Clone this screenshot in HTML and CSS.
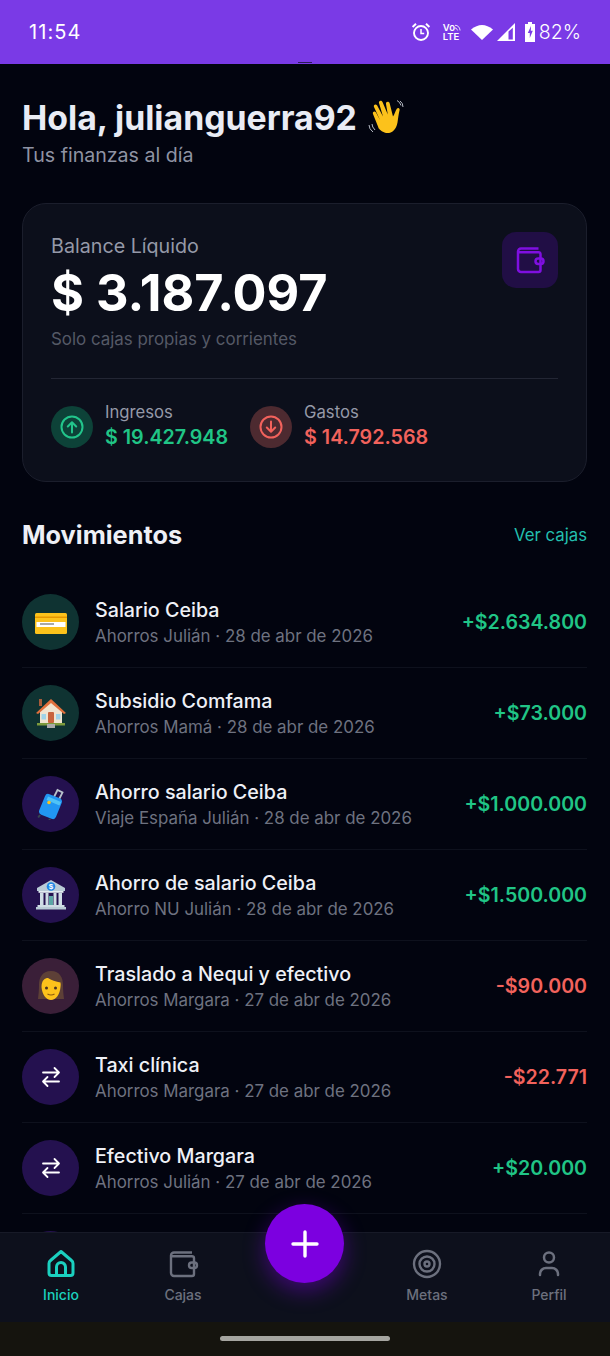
FILE: index.html
```html
<!DOCTYPE html>
<html lang="es">
<head>
<meta charset="utf-8">
<title>Inicio</title>
<link rel="stylesheet" href="styles.css">
</head>
<body>
<div class="app">
  <header class="status">
    <span class="clock">11:54</span>
    <div class="status-icons">
      <svg class="si-alarm" viewBox="0 0 20 20" width="20" height="20" fill="none" stroke="#fff" stroke-width="1.9"><circle cx="10" cy="11" r="7"/><path d="M10 7v4.4h3.2" stroke-width="1.5"/><path d="M1.6 5 5 1.8M18.4 5 15 1.800" stroke-width="2"/></svg>
      <span class="volte"><span>Vo<svg viewBox="0 0 8 8" width="8" height="8" fill="none" stroke="#fff" stroke-width="1"><path d="M0 2q5 0 6 6M0 5q2 0 3 3"/></svg></span><span>LTE</span></span>
      <svg class="si-wifi" viewBox="0 0 22 16" width="22" height="16"><path d="M0 5.500Q11-3.500 22 5.500L11 16Z" fill="#fff"/></svg>
      <svg class="si-signal" viewBox="0 0 18 18" width="18" height="18"><path d="M0 18 18 0V18Z" fill="#fff"/><path d="M11.500 8.500V16.400H15.800V4.800Z" fill="#7a3ae6"/></svg>
      <svg class="si-batt" viewBox="0 0 10 20" width="10" height="20"><path d="M3 0h4v2h3v18H0V2h3Z" fill="#fff"/><path d="M6 4 2.800 11h2v5l3-7.200H5.800Z" fill="#7a3ae6"/></svg>
      <span class="pct">82%</span>
    </div>
    <i class="notch"></i>
  </header>

  <main class="main">
    <section class="hello">
      <h1>Hola, julianguerra92
        <svg class="wave" viewBox="0 0 38 38" width="38" height="38"><path d="M12 30 6 15c-1-2.500 2-3.500 3-1.500l4 7.500-6-13c-1-2.500 2-3.500 3.200-1.500l5.800 11-4-13.500c-.7-2.500 2.500-3.300 3.500-1l5.300 12.500-1.800-10.500c-.4-2.500 3-3 3.700-.6l3.300 13.100c1.500-2 2.500-6 4-8 1.500-1.500 3 0 2.600 1.500-1 4-1.400 8-2.100 12.500-1.500 9-8 12-13 10-4-1.500-6-4-8.500-8.500Z" fill="#fcc21b"/><path d="M33 2q3 2 3 6M30 1.500q3 1.500 4 5M2 26q0 4 4 7M5 25q0 3 3 6" fill="none" stroke="#b7bcc6" stroke-width="1"/></svg>
      </h1>
      <p>Tus finanzas al día</p>
    </section>

    <section class="card">
      <div class="card-top">
        <div class="bal">
          <div class="bal-label">Balance Líquido</div>
          <div class="bal-value">$ 3.187.097</div>
          <div class="bal-note">Solo cajas propias y corrientes</div>
        </div>
        <div class="tile">
          <svg viewBox="0 0 32 32" width="32" height="32" fill="none" stroke="#7f0fe0" stroke-width="2.500" stroke-linejoin="round"><path d="M24.500 4.500H7a3 3 0 0 0-3 3V25a3 3 0 0 0 3 3h17.500a2 2 0 0 0 2-2V10a2 2 0 0 0-2-1.800H4"/><rect x="21.500" y="14.500" width="8" height="5.500" rx="2.700"/></svg>
        </div>
      </div>
      <div class="flows">
        <div class="flow">
          <span class="flow-ic up"><svg viewBox="0 0 24 24" width="24" height="24" fill="none" stroke="#22c58b" stroke-width="2" stroke-linecap="round" stroke-linejoin="round"><circle cx="12" cy="12" r="10.500"/><path d="M12 17.500V7.500M7.800 11.500 12 7.300l4.200 4.200"/></svg></span>
          <div><div class="flow-label">Ingresos</div><div class="flow-value pos">$ 19.427.948</div></div>
        </div>
        <div class="flow">
          <span class="flow-ic down"><svg viewBox="0 0 24 24" width="24" height="24" fill="none" stroke="#f2625c" stroke-width="2" stroke-linecap="round" stroke-linejoin="round"><circle cx="12" cy="12" r="10.500"/><path d="M12 6.500v10M7.800 12.500 12 16.700l4.200-4.200"/></svg></span>
          <div><div class="flow-label">Gastos</div><div class="flow-value neg">$ 14.792.568</div></div>
        </div>
      </div>
    </section>

    <div class="sec-head">
      <h2>Movimientos</h2>
      <span class="link">Ver cajas</span>
    </div>

    <ul class="list">
      <li class="row">
        <span class="av green"><svg viewBox="0 0 32 32" width="32" height="32"><rect x="0" y="7" width="32" height="21" rx="1.500" fill="#fcc21b"/><rect x="0" y="10.500" width="32" height="1.500" fill="#e59600"/><rect x="1.500" y="16" width="29" height="5" fill="#fff"/><rect x="5" y="17.500" width="14" height="1" fill="#555"/></svg></span>
        <div class="tx"><div class="tx-title">Salario Ceiba</div><div class="tx-sub">Ahorros Julián · 28 de abr de 2026</div></div>
        <span class="amt pos">+$2.634.800</span>
      </li>
      <li class="row">
        <span class="av green"><svg viewBox="0 0 32 32" width="32" height="32"><rect x="4" y="2" width="3" height="7" fill="#a65b3a"/><path d="M5 14 16 5l11 9v12H5Z" fill="#f0e4cf"/><path d="M1 16 16 2l15 14-2 1L16 6 3 17Z" fill="#e0703c"/><rect x="13" y="15" width="6" height="11" rx="1" fill="#c8643c"/><rect x="6.500" y="17" width="4.500" height="5.500" fill="#9fd4e8"/><rect x="21" y="17" width="4.500" height="5.500" fill="#9fd4e8"/><rect x="2" y="26" width="28" height="2.500" fill="#7c9a3c"/><rect x="12" y="27" width="8" height="4" fill="#a9a9a9"/></svg></span>
        <div class="tx"><div class="tx-title">Subsidio Comfama</div><div class="tx-sub">Ahorros Mamá · 28 de abr de 2026</div></div>
        <span class="amt pos">+$73.000</span>
      </li>
      <li class="row">
        <span class="av violet"><svg viewBox="0 0 32 32" width="32" height="32"><path d="M19 9 22.500 2l5 2.500-3.500 7" fill="none" stroke="#b8c2cc" stroke-width="1.800"/><rect x="6.500" y="7.500" width="18" height="22" rx="3.500" transform="rotate(22 15.500 18.500)" fill="#2196f3"/><path d="M13 8.500 26 14l-1.500 3.500L11.500 12Z" fill="#4fc3f7"/><circle cx="14" cy="14.500" r="1.800" fill="#fcc21b"/><path d="M5 27l-1.800 2.500M15 31l-1 2" stroke="#37474f" stroke-width="2"/></svg></span>
        <div class="tx"><div class="tx-title">Ahorro salario Ceiba</div><div class="tx-sub">Viaje España Julián · 28 de abr de 2026</div></div>
        <span class="amt pos">+$1.000.000</span>
      </li>
      <li class="row">
        <span class="av violet"><svg viewBox="0 0 32 32" width="32" height="32"><path d="M16 1 30 9v3H2V9Z" fill="#b9cbd6"/><circle cx="16" cy="7.500" r="4.300" fill="#1e88e5"/><text x="16" y="10.300" class="bank-s">$</text><rect x="3.500" y="12" width="25" height="1.800" fill="#e2ecf1"/><g fill="#cfdde5"><rect x="5" y="14" width="3.500" height="12"/><rect x="10.500" y="14" width="3" height="12"/><rect x="18.500" y="14" width="3" height="12"/><rect x="23.500" y="14" width="3.500" height="12"/></g><rect x="14" y="17" width="4" height="9" fill="#5aa6a6"/><rect x="2.500" y="26" width="27" height="2" fill="#cfdde5"/><rect x="1" y="28" width="30" height="2.500" fill="#b9cbd6"/></svg></span>
        <div class="tx"><div class="tx-title">Ahorro de salario Ceiba</div><div class="tx-sub">Ahorro NU Julián · 28 de abr de 2026</div></div>
        <span class="amt pos">+$1.500.000</span>
      </li>
      <li class="row">
        <span class="av plum"><svg viewBox="0 0 32 32" width="32" height="32"><path d="M16 1C7 1 4 8 4 15c0 5-.5 10-1 14h26c-.5-4-1-9-1-14 0-7-3-14-12-14Z" fill="#5d4037"/><path d="M6.500 17C6.500 10 10 8 13 8c3 2 8 4 12.500 4.500.3 1.500.3 3 0 4.500C25 24 21 30 16 30S7 24 6.500 17Z" fill="#fcc21b"/><circle cx="11.500" cy="18" r="1.500" fill="#4a3320"/><circle cx="20.500" cy="18" r="1.500" fill="#4a3320"/><path d="M12.500 24q3.500 2 7 0" fill="none" stroke="#8a5a12" stroke-width="1.200"/></svg></span>
        <div class="tx"><div class="tx-title">Traslado a Nequi y efectivo</div><div class="tx-sub">Ahorros Margara · 27 de abr de 2026</div></div>
        <span class="amt neg">-$90.000</span>
      </li>
      <li class="row">
        <span class="av violet"><svg class="swap" viewBox="0 0 24 24" width="24" height="24" fill="none" stroke="#fff" stroke-width="1.800" stroke-linecap="round" stroke-linejoin="round"><path d="M4 7.500h16M15.500 3l4.500 4.500-4.500 4.500M20 16.500H4M8.500 12 4 16.500 8.500 21"/></svg></span>
        <div class="tx"><div class="tx-title">Taxi clínica</div><div class="tx-sub">Ahorros Margara · 27 de abr de 2026</div></div>
        <span class="amt neg">-$22.771</span>
      </li>
      <li class="row">
        <span class="av violet"><svg class="swap" viewBox="0 0 24 24" width="24" height="24" fill="none" stroke="#fff" stroke-width="1.800" stroke-linecap="round" stroke-linejoin="round"><path d="M4 7.500h16M15.500 3l4.500 4.500-4.500 4.500M20 16.500H4M8.500 12 4 16.500 8.500 21"/></svg></span>
        <div class="tx"><div class="tx-title">Efectivo Margara</div><div class="tx-sub">Ahorros Julián · 27 de abr de 2026</div></div>
        <span class="amt pos">+$20.000</span>
      </li>
      <li class="row">
        <span class="av violet"></span>
      </li>
    </ul>
  </main>

  <nav class="nav">
    <a class="tab active">
      <svg viewBox="0 0 32 32" width="32" height="32" fill="none" stroke="currentColor" stroke-width="3" stroke-linejoin="round"><path d="M16 3.500 5.500 12.500a4 4 0 0 0-1.500 3V25a2.500 2.500 0 0 0 2.500 2.500h19A2.500 2.500 0 0 0 28 25v-9.500a4 4 0 0 0-1.500-3Z"/><path d="M11.500 27.500V19a4.500 4.500 0 0 1 9 0v8.500"/></svg>
      <span>Inicio</span>
    </a>
    <a class="tab">
      <svg viewBox="0 0 32 32" width="32" height="32" fill="none" stroke="currentColor" stroke-width="2.400" stroke-linejoin="round"><path d="M25 4.500H7a3 3 0 0 0-3 3V25a3 3 0 0 0 3 3h18a2 2 0 0 0 2-2V10a2 2 0 0 0-2-1.800H4"/><rect x="22" y="14.500" width="8" height="5.500" rx="2.700"/></svg>
      <span>Cajas</span>
    </a>
    <span class="tab-gap"></span>
    <a class="tab">
      <svg viewBox="0 0 32 32" width="32" height="32" fill="none" stroke="currentColor" stroke-width="2.400"><circle cx="16" cy="16" r="13"/><circle cx="16" cy="16" r="7.500"/><circle cx="16" cy="16" r="2.500"/></svg>
      <span>Metas</span>
    </a>
    <a class="tab">
      <svg viewBox="0 0 32 32" width="32" height="32" fill="none" stroke="currentColor" stroke-width="2.500" stroke-linecap="round"><circle cx="16" cy="9.500" r="5"/><path d="M7 27v-1a6 6 0 0 1 6-6h6a6 6 0 0 1 6 6v1"/></svg>
      <span>Perfil</span>
    </a>
    <button class="fab" type="button" aria-label="Agregar"><svg viewBox="0 0 32 32" width="32" height="32" fill="none" stroke="#fff" stroke-width="3.400" stroke-linecap="round"><path d="M16 4v24M4 16h24"/></svg></button>
  </nav>

  <div class="gesture"><i></i></div>
</div>
</body>
</html>
```

FILE: styles.css
```css
* { box-sizing: border-box; }
html, body { margin: 0; padding: 0; height: 100%; }
body { background: #02040f; color: #eef0f6; font-family: Inter, "Noto Sans", sans-serif; overflow: hidden; }
.app { display: flex; flex-direction: column; height: 1356px; width: 610px; overflow: hidden; }

.status { position: relative; flex: 0 0 64px; background: #7a3ae6; display: flex; justify-content: space-between; align-items: center; padding: 0 29px 0 29px; color: #fff; }
.clock { font-size: 20px; letter-spacing: 1.100px; font-weight: 400; }
.status-icons { display: flex; align-items: center; }
.volte { display: flex; flex-direction: column; font-size: 9.500px; line-height: 9.500px; font-weight: 600; margin-left: 12px; width: 19px; }
.volte span { display: flex; }
.si-wifi { margin-left: 9px; }
.si-signal { margin-left: 4px; }
.si-batt { margin-left: 10px; }
.pct { font-size: 19.500px; font-weight: 300; margin-left: 4px; }
.notch { position: absolute; left: 298px; bottom: 1px; width: 14px; height: 1px; background: #2a1a55; }

.main { flex: 1; min-height: 0; overflow: hidden; padding: 35px 23px 0 22px; }
.hello h1 { margin: 0; font-size: 33.800px; line-height: 38px; font-weight: 700; color: #e9ecf5; display: flex; align-items: center; gap: 10px; }
.wave { flex: none; }
.hello p { margin: 6px 0 0; font-size: 19.600px; line-height: 24px; color: #8f93a3; }

.card { margin-top: 36px; height: 279px; padding: 28px 28px 0 28px; border: 1px solid #1b1e2c; border-radius: 24px; background: #0c0f1b; }
.card-top { display: flex; justify-content: space-between; align-items: flex-start; height: 146px; }
.bal { padding-top: 1px; }
.bal-label { font-size: 19.700px; line-height: 26px; color: #9599a8; }
.bal-value { font-size: 50.400px; line-height: 60px; font-weight: 700; color: #fff; margin-top: 4px; }
.bal-note { font-size: 16.900px; line-height: 22px; color: #555966; margin-top: 5px; }
.tile { width: 56px; height: 56px; border-radius: 14px; background: #210e45; display: flex; align-items: center; justify-content: center; }

.flows { display: flex; gap: 22px; border-top: 1px solid #232634; padding-top: 24px; }
.flow { display: flex; align-items: center; gap: 12px; }
.flow-ic { width: 42px; height: 42px; border-radius: 50%; display: flex; align-items: center; justify-content: center; }
.flow-ic.up { background: #0d4238; }
.flow-ic.down { background: #4d2a30; }
.flow-label { font-size: 16.700px; line-height: 19px; color: #9599a8; }
.flow-value { font-size: 19.700px; line-height: 27px; font-weight: 600; margin-top: 2px; }
.pos { color: #20c586; }
.neg { color: #f2625c; }

.sec-head { display: flex; justify-content: space-between; align-items: center; margin-top: 35px; height: 34px; }
.sec-head h2 { margin: 0; font-size: 25.300px; font-weight: 700; color: #eef0f6; }
.link { font-size: 16.800px; color: #23bfae; padding-top: 2px; }

.list { list-style: none; margin: 26px 0 0; padding: 0; }
.row { display: flex; align-items: center; gap: 16px; padding: 17px 0; border-bottom: 1px solid #0e111d; height: 91px; }
.av { flex: none; width: 57px; height: 56px; border-radius: 50%; display: flex; align-items: center; justify-content: center; }
.av.green { background: #0f3332; }
.av.violet { background: #24114f; }
.av.plum { background: #3a1f38; }
.tx { flex: 1; min-width: 0; padding-top: 2px; }
.tx-title { font-size: 19.700px; line-height: 26px; font-weight: 500; color: #eef0f6; }
.tx-sub { font-size: 16.900px; line-height: 26px; color: #6e7280; }
.amt { font-size: 19.600px; font-weight: 600; }
.bank-s { font-family: "Liberation Sans", sans-serif; font-size: 8px; font-weight: 700; fill: #fff; text-anchor: middle; }

.nav { position: relative; flex: 0 0 90px; display: grid; grid-template-columns: repeat(5, 122px); background: #0d101c; border-top: 1px solid #171a27; }
.tab { display: flex; flex-direction: column; align-items: center; padding-top: 15px; color: #6c707e; font-size: 14px; font-weight: 500; }
.tab span { margin-top: 6px; line-height: 18px; }
.tab.active { color: #1bd0bf; }
.fab { position: absolute; left: 265px; top: -29px; width: 79px; height: 79px; padding: 0; border: 0; border-radius: 50%; background: #7c00e0; box-shadow: 0 8px 22px rgba(124, 0, 224, .45); display: flex; align-items: center; justify-content: center; }
.gesture { flex: 0 0 34px; background: #15140e; display: flex; justify-content: center; padding-top: 14px; }
.gesture i { width: 170px; height: 5px; border-radius: 3px; background: #a5a5a0; }
```
